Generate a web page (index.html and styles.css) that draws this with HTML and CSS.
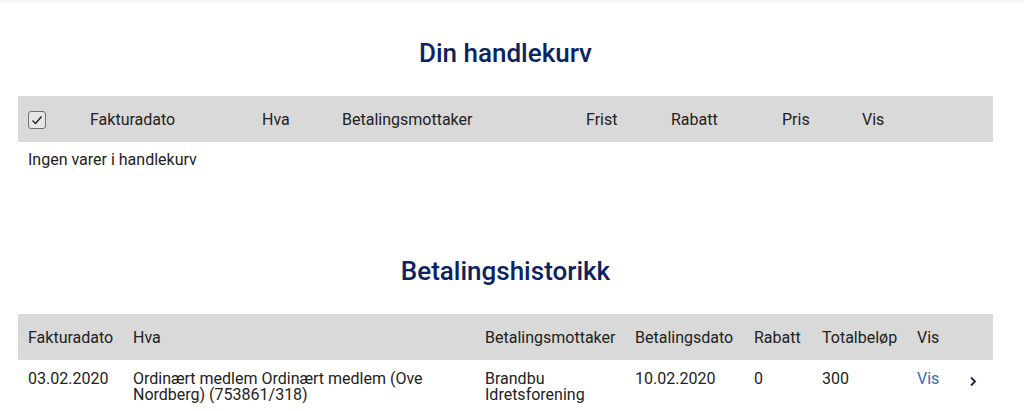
FILE: index.html
```html
<!DOCTYPE html>
<html lang="no">
<head>
  <meta charset="UTF-8">
  <title>Din handlekurv</title>
  <link rel="stylesheet" href="styles.css">
</head>
<body>

<div class="page">
  <h2 class="cart-title">Din handlekurv</h2>
  <table class="cart-table">
    <thead>
      <tr>
        <th class="c-check">
          <span class="checkbox">
            <svg width="12" height="10" viewBox="0 0 12 10"><polyline points="1.5,5.5 4.5,8.5 10.5,1.5" fill="none" stroke="#222" stroke-width="1.4"/></svg>
          </span>
        </th>
        <th class="c-date">Fakturadato</th>
        <th class="c-what">Hva</th>
        <th class="c-payee">Betalingsmottaker</th>
        <th class="c-due">Frist</th>
        <th class="c-disc">Rabatt</th>
        <th class="c-price">Pris</th>
        <th class="c-show">Vis</th>
      </tr>
    </thead>
  </table>
  <p class="empty">Ingen varer i handlekurv</p>

  <h2 class="history-title">Betalingshistorikk</h2>
  <table class="history-table">
    <thead>
      <tr>
        <th class="h-date">Fakturadato</th>
        <th class="h-what">Hva</th>
        <th class="h-payee">Betalingsmottaker</th>
        <th class="h-paid">Betalingsdato</th>
        <th class="h-disc">Rabatt</th>
        <th class="h-total">Totalbeløp</th>
        <th class="h-show">Vis</th>
        <th class="h-arrow"></th>
      </tr>
    </thead>
    <tbody>
      <tr>
        <td>03.02.2020</td>
        <td>Ordinært medlem Ordinært medlem (Ove Nordberg) (753861/318)</td>
        <td>Brandbu Idretsforening</td>
        <td>10.02.2020</td>
        <td>0</td>
        <td>300</td>
        <td><a href="#" class="show-link">Vis</a></td>
        <td class="arrow">
          <svg width="8" height="11" viewBox="0 0 8 11"><polyline points="2,1.5 6,5.5 2,9.5" fill="none" stroke="#1c2433" stroke-width="1.8"/></svg>
        </td>
      </tr>
    </tbody>
  </table>
</div>

</body>
</html>
```

FILE: styles.css
```css
body {
  margin: 0;
  font-family: Roboto, "Liberation Sans", sans-serif;
  color: #222;
  background: #fff;
  border-top: 3px solid #f7f7f7;
}

.page {
  width: 975px;
  margin-left: 18px;
}

h2 {
  font-size: 26px;
  font-weight: 500;
  line-height: 30px;
  color: #0b2461;
  text-align: center;
  margin: 0;
}

.cart-title {
  margin-top: 35px;
  margin-bottom: 28px;
}

.history-title {
  margin-top: 87px;
  margin-bottom: 28px;
}

table {
  width: 100%;
  border-collapse: collapse;
  table-layout: fixed;
  font-size: 16px;
}

th {
  background: #d9d9d9;
  height: 46px;
  padding: 0 0 0 10px;
  text-align: left;
  font-weight: 400;
  vertical-align: middle;
}

td {
  padding: 11px 12px 0 10px;
  line-height: 16px;
  vertical-align: top;
}

.checkbox {
  display: inline-flex;
  align-items: center;
  justify-content: center;
  width: 16px;
  height: 16px;
  border: 1px solid #6f6f6f;
  border-radius: 3px;
  background: #e6e6e6;
  vertical-align: middle;
}

.c-check { width: 52px; }
.c-date { width: 162px; }
.c-what { width: 70px; }
.c-payee { width: 234px; }
.c-due { width: 75px; }
.c-disc { width: 101px; }
.c-price { width: 70px; }

.empty {
  margin: 9px 0 0 10px;
  font-size: 16px;
  line-height: 18px;
}

.h-date { width: 95px; }
.h-what { width: 342px; }
.h-payee { width: 140px; }
.h-paid { width: 109px; }
.h-disc { width: 58px; }
.h-total { width: 85px; }
.h-show { width: 48px; }

.show-link {
  color: #2a6fc0;
  text-decoration: none;
}

.arrow {
  padding-top: 14px;
  padding-left: 4px;
}
```
